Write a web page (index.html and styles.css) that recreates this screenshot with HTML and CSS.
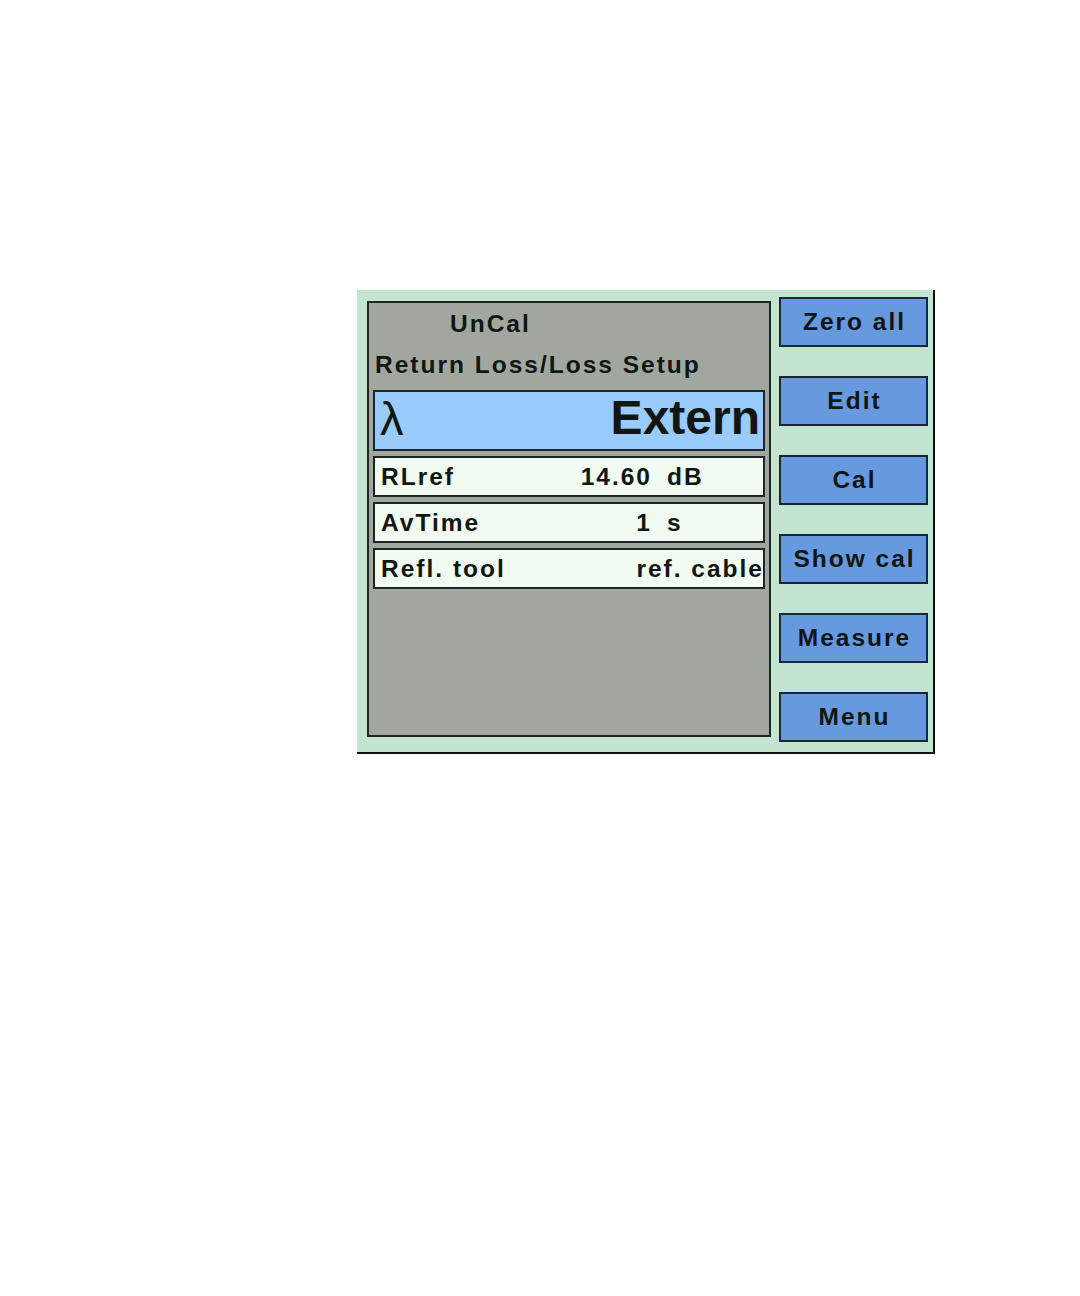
FILE: index.html
```html
<!DOCTYPE html>
<html>
<head>
<meta charset="utf-8">
<link rel="stylesheet" href="styles.css">
</head>
<body>
<div class="page">
  <div class="screen">
    <div class="panel">
      <div class="status">UnCal</div>
      <div class="title">Return Loss/Loss Setup</div>
      <div class="lambda-row">
        <span class="lambda">λ</span>
        <span class="big">Extern</span>
      </div>
      <div class="row">
        <span class="label">RLref</span>
        <span class="num">14.60</span>
        <span class="unit">dB</span>
      </div>
      <div class="row">
        <span class="label">AvTime</span>
        <span class="num">1</span>
        <span class="unit">s</span>
      </div>
      <div class="row">
        <span class="label">Refl. tool</span>
        <span class="right">ref. cable</span>
      </div>
    </div>
    <div class="buttons">
      <div class="btn">Zero all</div>
      <div class="btn">Edit</div>
      <div class="btn">Cal</div>
      <div class="btn">Show cal</div>
      <div class="btn">Measure</div>
      <div class="btn">Menu</div>
    </div>
  </div>
</div>
</body>
</html>
```

FILE: styles.css
```css
html, body {
  margin: 0;
  padding: 0;
  background: #ffffff;
}

body {
  font-family: "Liberation Sans", Arial, sans-serif;
  color: #111611;
}

.page {
  width: 1080px;
  height: 1296px;
  padding: 290px 0 0 357px;
  box-sizing: border-box;
}

.screen {
  width: 578px;
  height: 464px;
  box-sizing: border-box;
  background: #c4e4d2;
  border-right: 2px solid #0c100e;
  border-bottom: 2px solid #0c100e;
  padding: 7px 0 0 10px;
  display: flex;
  align-items: flex-start;
}

.panel {
  margin-top: 4px;
  width: 404px;
  height: 436px;
  box-sizing: border-box;
  background: #a1a79f;
  border: 2px solid #1d2822;
  padding: 7px 4px 0 4px;
  display: flex;
  flex-direction: column;
}

.status,
.title,
.row,
.btn {
  font-size: 24.5px;
  font-weight: bold;
  letter-spacing: 2px;
  line-height: 28px;
}

.status {
  padding-left: 77px;
  height: 28px;
}

.title {
  margin-top: 13px;
  padding-left: 2px;
  height: 28px;
  white-space: nowrap;
}

.lambda-row {
  margin-top: 11px;
  height: 61px;
  box-sizing: border-box;
  background: #99ccfc;
  border: 2px solid #1a2530;
  display: flex;
  align-items: center;
  justify-content: space-between;
  padding: 0 3px 5px 5px;
}

.lambda {
  font-size: 47px;
  line-height: 47px;
  font-weight: normal;
}

.big {
  font-size: 48px;
  line-height: 48px;
  font-weight: bold;
}

.row {
  margin-top: 5px;
  height: 41px;
  box-sizing: border-box;
  background: #f1fbf1;
  border: 2px solid #1e2620;
  display: flex;
  align-items: center;
  padding: 0 0 0 6px;
  white-space: nowrap;
}

.label {
  width: 188px;
}

.num {
  width: 83px;
  text-align: right;
}

.unit {
  margin-left: 15px;
}

.right {
  flex: 1;
  text-align: right;
  margin-right: -1px;
}

.buttons {
  margin-left: 8px;
  width: 149px;
  display: flex;
  flex-direction: column;
  gap: 29px;
}

.btn {
  height: 50px;
  box-sizing: border-box;
  background: #6699dd;
  border: 2px solid #17243a;
  display: flex;
  align-items: center;
  justify-content: center;
  padding-left: 2px;
  white-space: nowrap;
}
```
